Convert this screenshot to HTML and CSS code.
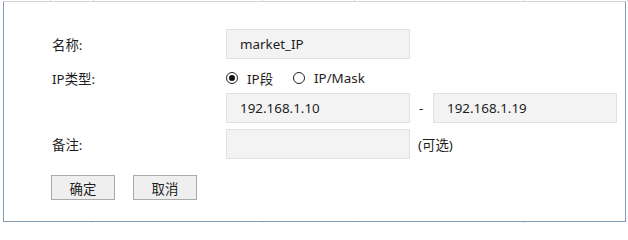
FILE: index.html
```html
<!DOCTYPE html>
<html lang="zh-CN">
<head>
<meta charset="utf-8">
<title>IP</title>
<link rel="stylesheet" href="styles.css">
</head>
<body>
<div class="ticks ticks-top">
  <span class="t1"></span><span class="t2"></span><span class="t3"></span><span class="t4"></span><span class="t5"></span><span class="t6"></span>
</div>
<div class="frame">
  <div class="row row-name">
    <div class="label">名称:</div>
    <input class="field" type="text" value="market_IP">
  </div>
  <div class="row row-type">
    <div class="label">IP类型:</div>
    <div class="radios">
      <span class="option option-first"><span class="radio checked"></span><span>IP段</span></span>
      <span class="option"><span class="radio"></span><span>IP/Mask</span></span>
    </div>
  </div>
  <div class="row row-range">
    <div class="label"></div>
    <input class="field" type="text" value="192.168.1.10">
    <span class="dash">-</span>
    <input class="field" type="text" value="192.168.1.19">
  </div>
  <div class="row row-note">
    <div class="label">备注:</div>
    <input class="field" type="text" value="">
    <span class="hint">(可选)</span>
  </div>
  <div class="buttons">
    <button class="btn" type="button">确定</button>
    <button class="btn" type="button">取消</button>
  </div>
</div>
<div class="ticks ticks-bottom">
  <span class="b1"></span><span class="b2"></span><span class="b3"></span><span class="b4"></span><span class="b5"></span>
</div>
</body>
</html>
```

FILE: styles.css
```css
html, body {
  margin: 0;
  padding: 0;
  background: #ffffff;
}
body {
  width: 628px;
  height: 223px;
  overflow: hidden;
  font-family: "Noto Sans", "Noto Sans CJK SC", sans-serif;
  font-size: 13.4px;
  color: #1e1e1e;
}
.ticks {
  display: flex;
  height: 1px;
}
.ticks span {
  display: block;
  height: 1px;
  border-right: 1px solid #d6d6d6;
  flex: none;
}
.ticks-top .t1 { width: 50px; }
.ticks-top .t2 { width: 42px; }
.ticks-top .t3 { width: 168px; }
.ticks-top .t4 { width: 91px; }
.ticks-top .t5 { width: 168px; }
.ticks-top .t6 { width: 103px; }
.ticks-bottom span { border-right-color: #dde3ea; }
.ticks-bottom .b1 { width: 92px; }
.ticks-bottom .b2 { width: 169px; }
.ticks-bottom .b3 { width: 91px; }
.ticks-bottom .b4 { width: 168px; }

.frame {
  box-sizing: border-box;
  margin-left: 3px;
  width: 623px;
  height: 221px;
  border: 1px solid #859db4;
  border-top-color: #d4d4d4;
  padding: 27px 0 0 48px;
  display: flex;
  flex-direction: column;
}
.row {
  display: flex;
  align-items: center;
}
.label {
  width: 174px;
  flex: none;
}
.row-name { height: 30px; }
.row-type { height: 26px; margin-top: 6px; }
.row-range { height: 30px; margin-top: 2px; }
.row-note { height: 30px; margin-top: 6px; }

.field {
  box-sizing: border-box;
  width: 184px;
  height: 30px;
  margin: 0;
  padding: 0 0 0 13px;
  border: 1px solid #e2e2e2;
  background: #f3f3f3;
  font-family: "Noto Sans", "Noto Sans CJK SC", sans-serif;
  font-size: 13.4px;
  color: #1e1e1e;
  outline: none;
  flex: none;
}
.dash {
  width: 23px;
  box-sizing: border-box;
  padding-left: 9px;
  flex: none;
}
.hint {
  padding-left: 8px;
}
.radios {
  display: flex;
  align-items: center;
}
.option {
  display: inline-flex;
  align-items: center;
  gap: 9px;
}
.option-first {
  width: 67px;
}
.radio {
  box-sizing: border-box;
  width: 12px;
  height: 12px;
  border: 1px solid #222222;
  border-radius: 50%;
  background: #ffffff;
  display: flex;
  align-items: center;
  justify-content: center;
  flex: none;
}
.radio.checked::after {
  content: "";
  width: 6px;
  height: 6px;
  border-radius: 50%;
  background: #111111;
}
.buttons {
  display: flex;
  gap: 18px;
  margin-top: 16px;
  margin-left: -1px;
}
.btn {
  box-sizing: border-box;
  width: 64px;
  height: 25px;
  margin: 0;
  padding: 0;
  border: 1px solid #ababab;
  background: #efefef;
  font-family: "Noto Sans", "Noto Sans CJK SC", sans-serif;
  font-size: 13.4px;
  color: #1e1e1e;
}
```
